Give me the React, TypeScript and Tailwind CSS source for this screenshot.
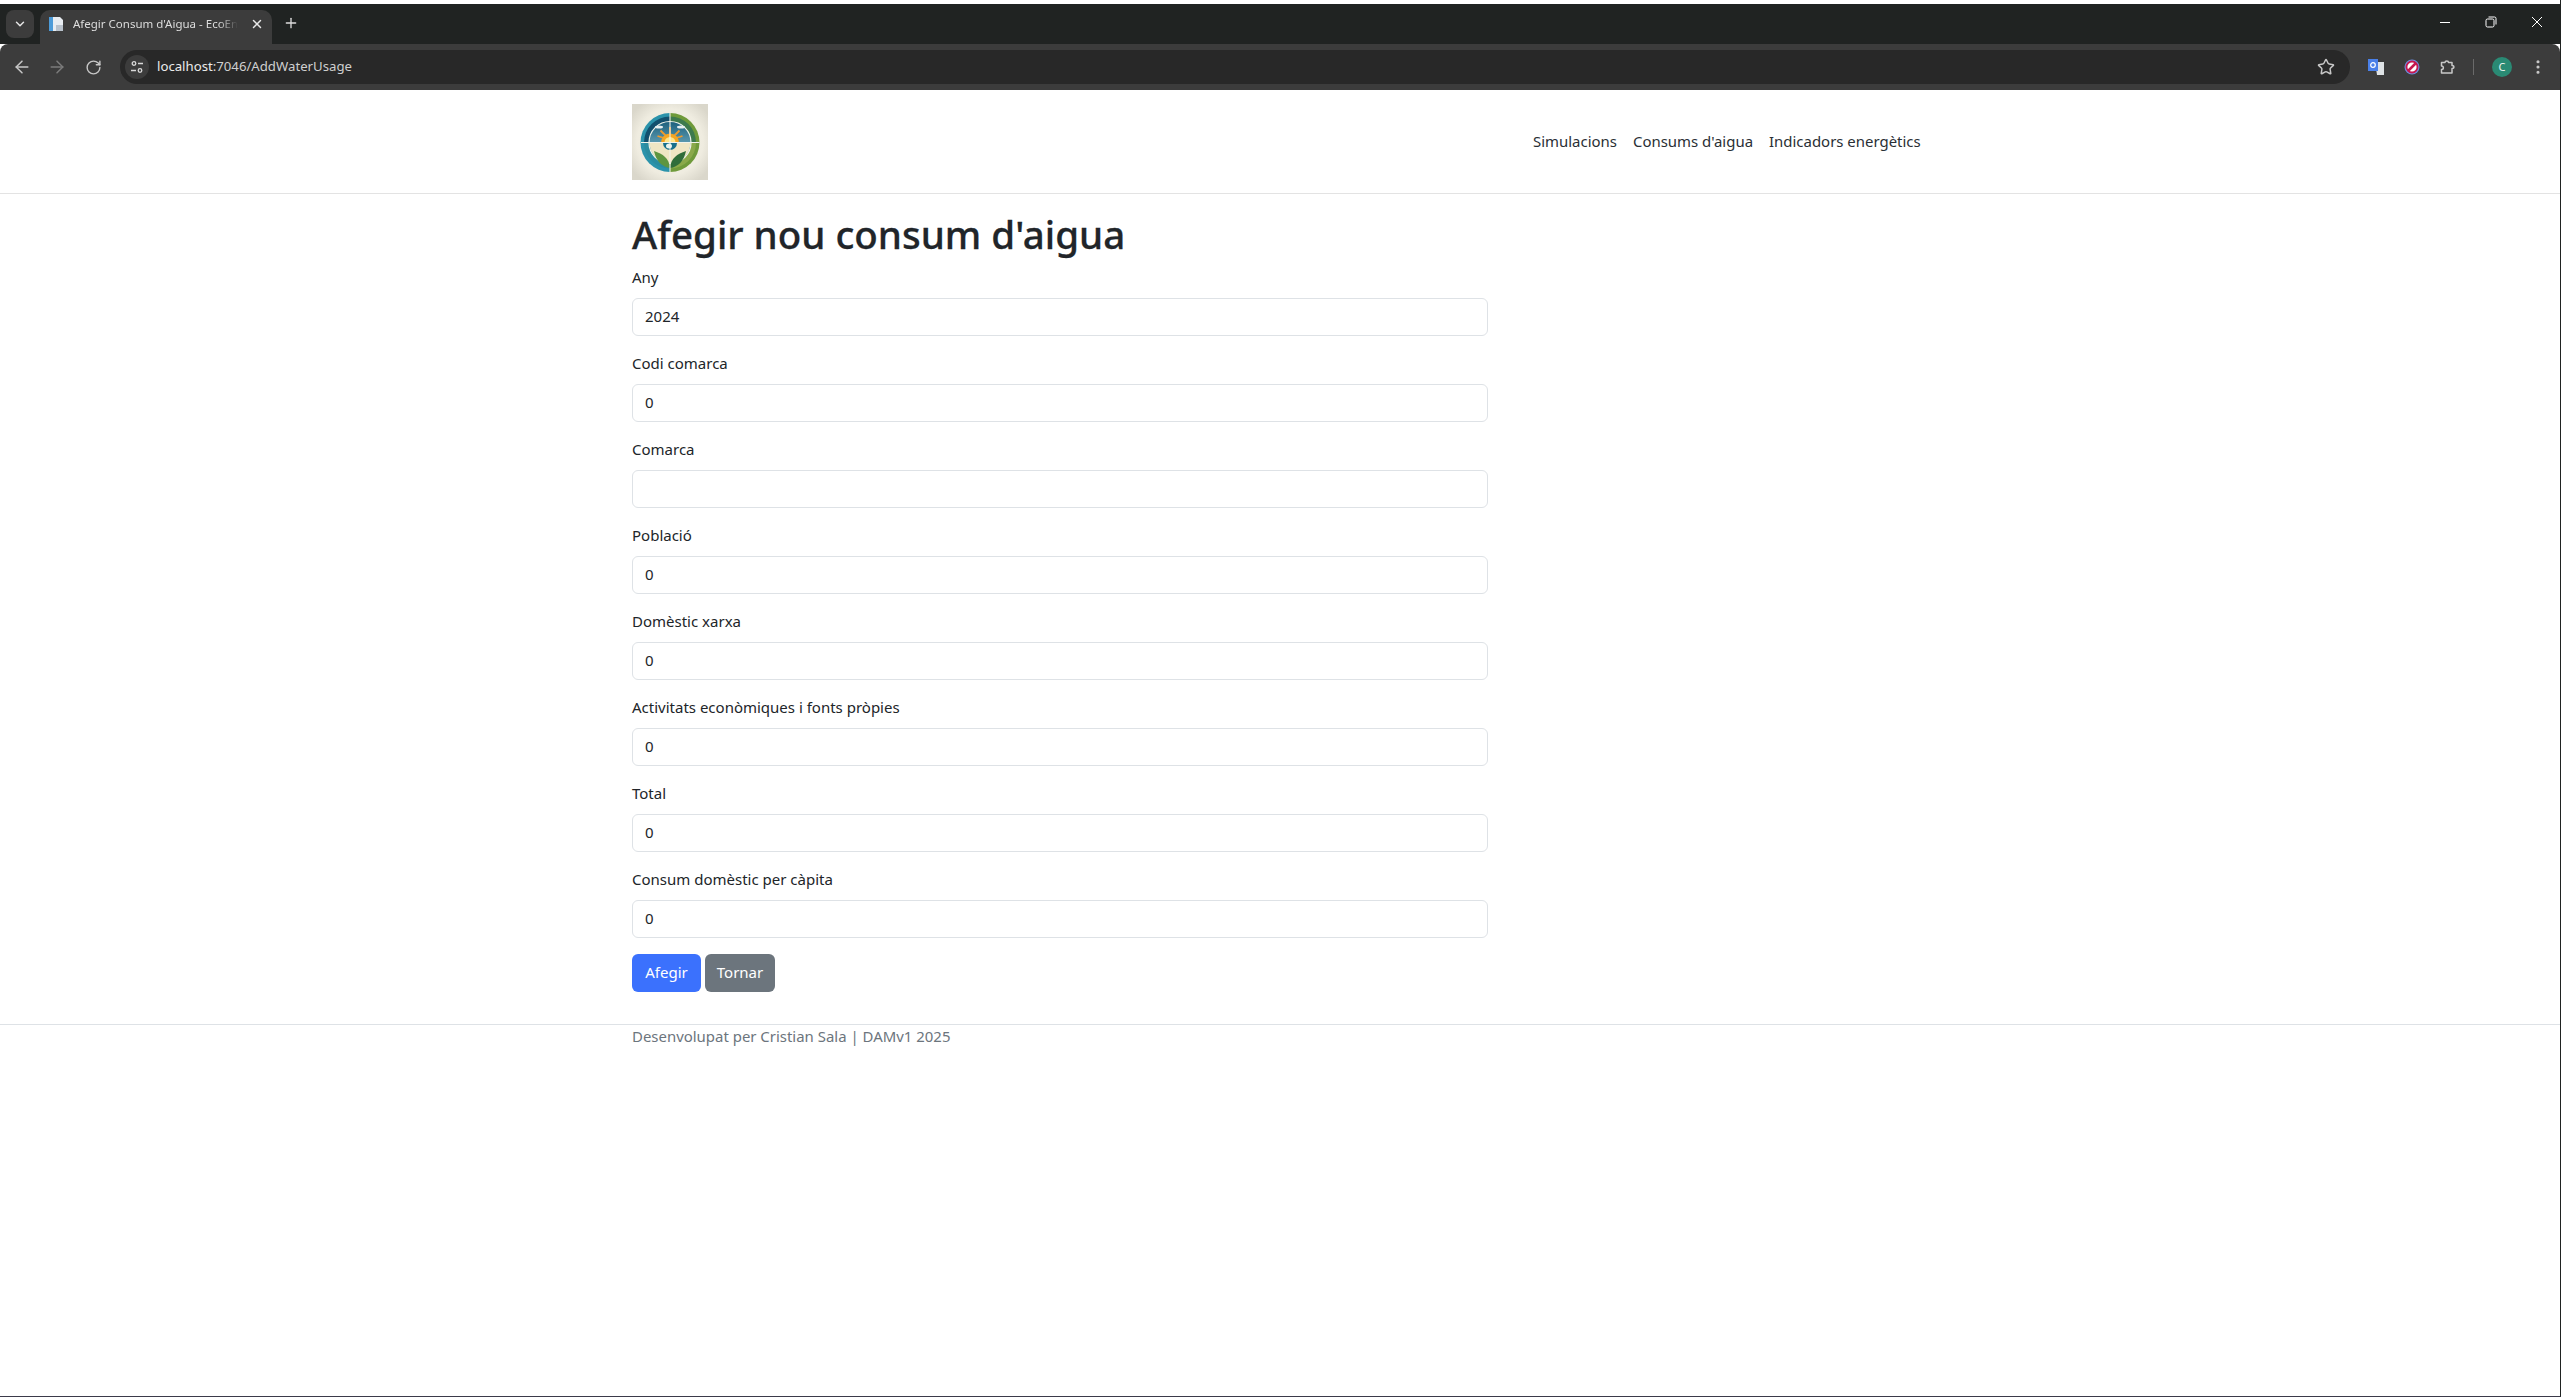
import React from "react";
import { ArrowLeft, ArrowRight, RotateCw, Star, X, Plus, ChevronDown, EllipsisVertical } from "lucide-react";

const font = "font-['Noto_Sans','Open_Sans',sans-serif]";

const fields: [string, string][] = [
  ["Any", "2024"],
  ["Codi comarca", "0"],
  ["Comarca", ""],
  ["Població", "0"],
  ["Domèstic xarxa", "0"],
  ["Activitats econòmiques i fonts pròpies", "0"],
  ["Total", "0"],
  ["Consum domèstic per càpita", "0"],
];

function Logo() {
  return (
    <svg width="76" height="76" viewBox="0 0 76 76" className="block">
      <defs>
        <radialGradient id="bg" cx="50%" cy="50%" r="62%">
          <stop offset="0%" stopColor="#f6f3e8" />
          <stop offset="70%" stopColor="#efece0" />
          <stop offset="100%" stopColor="#dad7cb" />
        </radialGradient>
        <linearGradient id="sky" x1="0" y1="0" x2="0" y2="1">
          <stop offset="0%" stopColor="#1b5f7c" />
          <stop offset="100%" stopColor="#9ad2e2" />
        </linearGradient>
      </defs>
      <rect width="76" height="76" fill="url(#bg)" />
      <path d="M38 9A29.500 29.500 0 0 0 38 68Z" fill="#2b93ab" />
      <path d="M38 9A29.500 29.500 0 0 1 38 68Z" fill="#6f9a3a" />
      <path d="M38 12.500A26 26 0 0 0 12 38.500L38 38.500Z" fill="#12506e" />
      <path d="M38 12.500A26 26 0 0 1 64 38.500L38 38.500Z" fill="#3d7a4e" />
      <path d="M12 38.500A26 26 0 0 0 38 64.500L38 38.500Z" fill="#2a8ca0" />
      <path d="M64 38.500A26 26 0 0 1 38 64.500L38 38.500Z" fill="#8aa94a" />
      <circle cx="38" cy="38.500" r="21" fill="url(#sky)" stroke="#eef3ea" strokeWidth="1.200" />
      <path d="M17.500 38.500A20.500 20.500 0 0 0 38 59L38 38.500Z" fill="#efe6c4" />
      <path d="M58.500 38.500A20.500 20.500 0 0 1 38 59L38 38.500Z" fill="#efe6c4" />
      <g stroke="#ee9a2c" strokeWidth="1.800">
        <path d="M38 36V23M38 36L28.500 26.500M38 36L47.500 26.500M38 36L25.500 32M38 36L50.500 32" />
      </g>
      <ellipse cx="27" cy="23" rx="4" ry="1.500" fill="#e6eff0" />
      <ellipse cx="49" cy="23" rx="4" ry="1.500" fill="#e6eff0" />
      <path d="M29 38.500a9 9 0 0 1 18 0Z" fill="#f5a623" />
      <path d="M32.500 38.500a5.500 5.500 0 0 1 11 0Z" fill="#fde58a" />
      <path d="M31 39a7 7 0 0 0 14 0Z" fill="#17708c" />
      <ellipse cx="37" cy="42" rx="3" ry="2.500" fill="#e8f3ee" />
      <path d="M38 64C37 54 31 50 22 47C24 57 30 63 38 64Z" fill="#5d9540" />
      <path d="M38 64C39 54 45 50 54 47C52 57 46 63 38 64Z" fill="#2f6d3a" />
      <path d="M9 38.500H67.500M38 9V68" stroke="#f1f3ea" strokeWidth="1.100" />
    </svg>
  );
}

function Browser() {
  return (
    <div className="flex flex-col shrink-0">
      <div className="h-[40px] bg-[#202322] flex items-center pl-[6px]">
        <div className="w-[28px] h-[28px] rounded-[8px] bg-[#3c3c3c] flex items-center justify-center text-[#e6e6e6]">
          <ChevronDown size={14} strokeWidth={2.500} />
        </div>
        <div className="ml-[6px] self-end w-[232px] h-[34px] bg-[#3c3c3c] rounded-t-[10px] flex items-center pl-[7px] pr-[8px] pb-[6px]">
          <svg width="18" height="18" viewBox="0 0 18 18" className="shrink-0">
            <path d="M2 2h4v14H2z" fill="#4d9bd8" />
            <path d="M6 2h7l3 3v11H6z" fill="#e8edf2" />
            <path d="M9 10h7v6H9z" fill="#b9c2cc" />
          </svg>
          <span className={`ml-[8px] whitespace-nowrap text-[11.500px] text-[#dddddd] [mask-image:linear-gradient(to_right,black_88%,transparent_100%)] ${font}`}>Afegir Consum d'Aigua - EcoEn</span>
          <X size={14} className="ml-auto text-[#e8e8e8]" strokeWidth={2.500} />
        </div>
        <Plus size={16} strokeWidth={2} className="ml-[11px] text-[#dddddd] mt-[-3px]" />
        <div className="ml-auto flex items-center text-white mt-[-4px]">
          <div className="w-[46px] flex justify-center">
            <svg width="10" height="10" viewBox="0 0 10 10" stroke="white" strokeWidth="1"><path d="M0 5.500H10" /></svg>
          </div>
          <div className="w-[46px] flex justify-center">
            <svg width="12" height="12" viewBox="0 0 12 12" fill="none" stroke="white" strokeWidth="1">
              <rect x="1" y="3" width="8" height="8" rx="1.500" />
              <path d="M3.500 1H9.500A1.500 1.500 0 0 1 11 2.500V8.500" />
            </svg>
          </div>
          <div className="w-[46px] flex justify-center">
            <svg width="10" height="10" viewBox="0 0 10 10" stroke="white" strokeWidth="1"><path d="M0 0L10 10M10 0L0 10" /></svg>
          </div>
        </div>
      </div>
      <div className="h-[46px] bg-[#3c3c3c] rounded-t-[8px] flex items-center pl-[12px]">
        <ArrowLeft size={20} className="text-[#c7c7c7] shrink-0" strokeWidth={1.800} />
        <ArrowRight size={20} className="ml-[15px] text-[#7b7b7b] shrink-0" strokeWidth={1.800} />
        <RotateCw size={17} className="ml-[18px] text-[#c7c7c7] shrink-0" strokeWidth={2} />
        <div className="ml-[18px] h-[34px] flex-1 rounded-[17px] bg-[#282828] flex items-center pl-[5px]">
          <div className="w-[24px] h-[24px] rounded-full bg-[#3c3c3c] flex items-center justify-center">
            <svg width="14" height="14" viewBox="0 0 14 14" fill="none" stroke="#d8d8d8" strokeWidth="1.300">
              <circle cx="4" cy="3.500" r="1.800" />
              <path d="M8 3.500h5M1 10.500h5" />
              <circle cx="10" cy="10.500" r="1.800" />
            </svg>
          </div>
          <span className={`ml-[8px] text-[13.200px] text-[#cfcfcf] ${font}`}><span className="text-[#ececec]">localhost</span>:7046/AddWaterUsage</span>
          <Star size={18} className="ml-auto mr-[15px] text-[#c7c7c7]" strokeWidth={2} />
        </div>
        <div className="w-[210px] flex items-center shrink-0 pl-[18px]">
          <svg width="16" height="16" viewBox="0 0 16 16" className="shrink-0">
            <path d="M7 3h9v13H9z" fill="#dfe3e6" />
            <path d="M0 0h10v12H0z" fill="#4a80e8" />
            <circle cx="5" cy="6" r="2.300" fill="none" stroke="white" strokeWidth="1.200" />
          </svg>
          <svg width="16" height="16" viewBox="0 0 16 16" className="ml-[20px] shrink-0">
            <circle cx="8" cy="8" r="7.500" fill="#6d8fe0" />
            <circle cx="8" cy="8" r="5.500" fill="#fff" stroke="#c5174f" strokeWidth="1.800" />
            <path d="M4 12L12 4" stroke="#c5174f" strokeWidth="2.500" />
          </svg>
          <svg width="16" height="16" viewBox="0 0 16 16" fill="none" stroke="#c7c7c7" strokeWidth="1.500" className="ml-[20px] shrink-0">
            <path d="M1.500 3.500H5C5 1.500 8.500 1.500 8.500 3.500H12V6.500C14.500 6.500 14.500 9.500 12 9.500V14H1.500V10.500C4 10.500 4 7 1.500 7Z" strokeLinejoin="round" />
          </svg>
          <div className="ml-[17px] w-px h-[16px] bg-[#6a6a6a]" />
          <div className={`ml-[18px] w-[20px] h-[20px] rounded-full bg-[#2a8a74] text-[#e8f2ee] text-[11px] flex items-center justify-center ${font}`}>C</div>
          <EllipsisVertical size={18} className="ml-[17px] text-[#c7c7c7]" strokeWidth={2.200} />
        </div>
      </div>
    </div>
  );
}

export default function App() {
  return (
    <div className={`h-screen flex flex-col pt-[4px] bg-white border-r border-r-[#202322] border-b border-b-[#3b3a4a] overflow-hidden text-[15px] text-[#212529] ${font}`}>
      <Browser />
      <header className="h-[104px] shrink-0 border-b border-[#e3e3e3] pl-[632px] flex items-center bg-white">
        <Logo />
        <nav className="ml-[825px] flex gap-[16px] text-[14.950px] text-[#2a2f35]">
          <span>Simulacions</span>
          <span>Consums d'aigua</span>
          <span>Indicadors energètics</span>
        </nav>
      </header>
      <main className="pl-[632px] pt-[16px] shrink-0">
        <div className="w-[856px]">
          <h1 className="text-[38.500px] leading-[48px] font-medium text-[#212529] mb-[8px] [-webkit-text-stroke:0.300px_#212529]">Afegir nou consum d'aigua</h1>
          {fields.map(([label, value]) => (
            <div key={label} className="mb-[16px]">
              <div className="h-[24px] leading-[22px] mb-[8px]">{label}</div>
              <div className="h-[38px] rounded-[6px] border border-[#dee2e6] pl-[12px] pb-[2px] flex items-center">{value}</div>
            </div>
          ))}
          <div className="flex gap-[4px] text-white">
            <div className="h-[38px] w-[69px] rounded-[6px] bg-[#3b71fd] pb-[2px] flex items-center justify-center">Afegir</div>
            <div className="h-[38px] w-[70px] rounded-[6px] bg-[#6c757d] pb-[2px] flex items-center justify-center">Tornar</div>
          </div>
        </div>
      </main>
      <footer className="mt-[32px] border-t border-[#dee2e6] pl-[632px] h-[24px] leading-[22px] text-[14.950px] text-[#6c757d] shrink-0">
        Desenvolupat per Cristian Sala | DAMv1 2025
      </footer>
    </div>
  );
}
